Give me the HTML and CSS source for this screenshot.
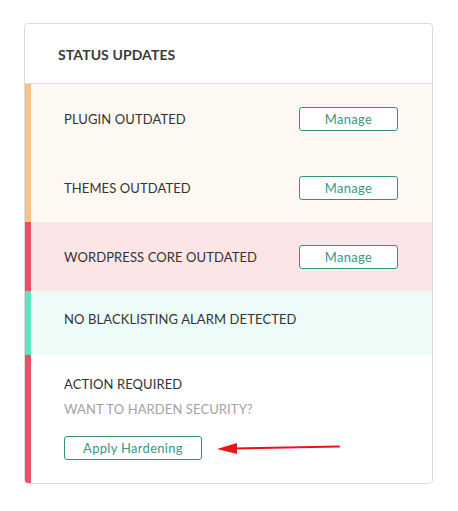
FILE: index.html
```html
<!DOCTYPE html>
<html>
<head>
<meta charset="utf-8">
<link rel="stylesheet" href="styles.css">
</head>
<body>
<div class="card">
  <div class="card-header">STATUS UPDATES</div>
  <div class="row row-warn">
    <span class="label">PLUGIN OUTDATED</span>
    <button class="btn btn-manage">Manage</button>
  </div>
  <div class="row row-warn">
    <span class="label">THEMES OUTDATED</span>
    <button class="btn btn-manage">Manage</button>
  </div>
  <div class="row row-danger">
    <span class="label">WORDPRESS CORE OUTDATED</span>
    <button class="btn btn-manage">Manage</button>
  </div>
  <div class="row row-ok">
    <span class="label">NO BLACKLISTING ALARM DETECTED</span>
  </div>
  <div class="action">
    <div class="label">ACTION REQUIRED</div>
    <div class="sub">WANT TO HARDEN SECURITY?</div>
    <div class="action-line">
      <button class="btn btn-apply">Apply Hardening</button>
      <svg class="arrow" width="124" height="14" viewBox="0 0 124 14">
        <line x1="16" y1="7.5" x2="122" y2="5.5" stroke="#e8141c" stroke-width="2.2" stroke-linecap="round"/>
        <polygon points="0,8 20,2 20,13" fill="#e8141c"/>
      </svg>
    </div>
  </div>
</div>
</body>
</html>
```

FILE: styles.css
```css
* { box-sizing: border-box; }
body {
  margin: 0;
  background: #fff;
  font-family: Lato, "Open Sans", sans-serif;
  color: #333;
}
.card {
  margin: 23px 0 0 24px;
  width: 409px;
  border: 1px solid #dcdcdc;
  border-radius: 4px;
  overflow: hidden;
  background: #fff;
}
.card-header {
  height: 60px;
  padding-left: 33px;
  padding-top: 2px;
  display: flex;
  align-items: center;
  font-size: 14px;
  font-weight: 700;
  color: #3a3a3a;
  border-bottom: 1px solid #dcdcdc;
  letter-spacing: 0.1px;
}
.row {
  display: flex;
  align-items: center;
  justify-content: space-between;
  height: 69px;
  padding: 0 34px 0 33px;
  border-left: 6px solid transparent;
}
.row-warn { background: #fdf8f2; border-left-color: #f6c28c; }
.row-danger { background: #fce5e7; border-left-color: #ea5068; }
.row-ok {
  background: #edfcf8;
  border-left-color: #5fe1c2;
  height: 64px;
  align-items: flex-start;
  padding-top: 20px;
}
.label {
  font-size: 13px;
  line-height: 16px;
  color: #333;
  letter-spacing: 0.1px;
}
.btn {
  font-family: Lato, "Open Sans", sans-serif;
  background: #fff;
  border: 1px solid #34917f;
  border-radius: 3px;
  color: #3a9885;
  font-size: 13px;
  padding: 0;
  letter-spacing: 0.3px;
}
.btn-manage { width: 99px; height: 24px; }
.action {
  border-left: 6px solid #ea5068;
  padding: 21px 0 23px 33px;
}
.action .label { display: block; }
.sub {
  margin-top: 9px;
  font-size: 13px;
  color: #a3a3a3;
  line-height: 16px;
  letter-spacing: 0.1px;
}
.action-line {
  margin-top: 19px;
  display: flex;
  align-items: center;
  gap: 15px;
}
.btn-apply { width: 138px; height: 24px; }
.arrow { display: block; }
```
